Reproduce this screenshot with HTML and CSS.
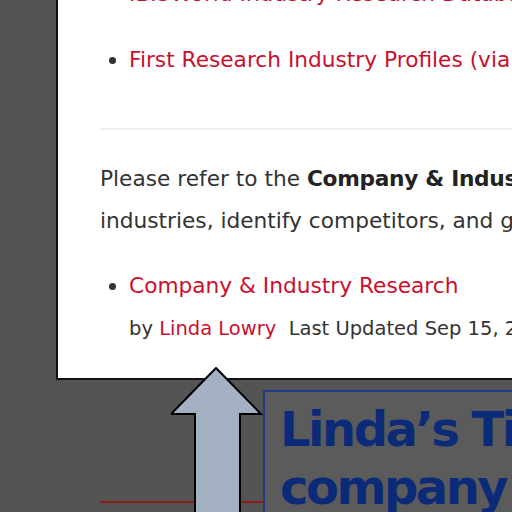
FILE: index.html
```html
<!DOCTYPE html>
<html>
<head>
<meta charset="utf-8">
<link rel="stylesheet" href="styles.css">
</head>
<body>
<div class="stage">
  <div class="panel">
    <ul class="links first">
      <li><a href="#">IBISWorld Industry Research Database</a></li>
      <li><a href="#">First Research Industry Profiles (via Mergent)</a></li>
    </ul>
    <hr class="sep">
    <p class="para">Please refer to the <b>Company &amp; Industry Research</b> guide to research<br>industries, identify competitors, and gather data.</p>
    <ul class="links">
      <li>
        <a href="#">Company &amp; Industry Research</a>
        <div class="meta">by <a href="#">Linda Lowry</a>&nbsp;&nbsp;Last Updated Sep 15, 2023</div>
      </li>
    </ul>
  </div>
  <div class="lower">
    <div class="redline"></div>
    <div class="callout">Linda’s Tip:<br>company</div>
  </div>
  <svg class="arrow" width="100" height="150" viewBox="0 0 100 150">
    <polygon points="45,1 90,47 69,47 69,150 24,150 24,47 0,47" fill="#a3b1c2" stroke="#000" stroke-width="2" stroke-linejoin="miter"/>
  </svg>
</div>
</body>
</html>
```
FILE: styles.css
```css
html, body {
  margin: 0;
  padding: 0;
  background: #545454;
  overflow: hidden;
  height: 512px;
}
.stage {
  position: relative;
  width: 512px;
  height: 512px;
  overflow: hidden;
}
.panel {
  margin-left: 56px;
  margin-top: -28px;
  width: 700px;
  height: 408px;
  box-sizing: border-box;
  background: #fff;
  border-left: 2px solid #111;
  border-bottom: 2px solid #111;
  padding: 0 0 0 42px;
  font-family: "DejaVu Sans", sans-serif;
  font-size: 21.7px;
  color: #333;
  white-space: nowrap;
}
.links {
  margin: 0;
  padding-left: 29px;
  list-style: disc;
}
.links li {
  line-height: 44px;
}
.links.first li + li {
  margin-top: 22px;
}
a {
  color: #c8102e;
  text-decoration: none;
}
.sep {
  border: 0;
  border-top: 2px solid #eeeeee;
  margin: 46px 0 0 0;
}
.para {
  margin: 28px 0 22px 0;
  line-height: 42px;
}
.para b {
  color: #222;
  letter-spacing: -0.3px;
}
.meta {
  font-size: 19.5px;
  line-height: 42px;
  color: #333;
}
.lower {
  position: relative;
  height: 92px;
}
.redline {
  position: absolute;
  left: 100px;
  right: 0;
  top: 121px;
  height: 2px;
  background: #8b1a1a;
}
.callout {
  position: absolute;
  left: 263px;
  top: 10px;
  width: 400px;
  height: 200px;
  box-sizing: border-box;
  border: 2px solid #1c3a8a;
  background: #5b5b5b;
  padding: 8px 0 0 15px;
  font-family: "DejaVu Sans", sans-serif;
  font-weight: 700;
  font-size: 48px;
  letter-spacing: -2.5px;
  line-height: 58px;
  color: #0b2a78;
  white-space: nowrap;
}
.arrow {
  position: absolute;
  left: 171px;
  top: 367px;
}
```
